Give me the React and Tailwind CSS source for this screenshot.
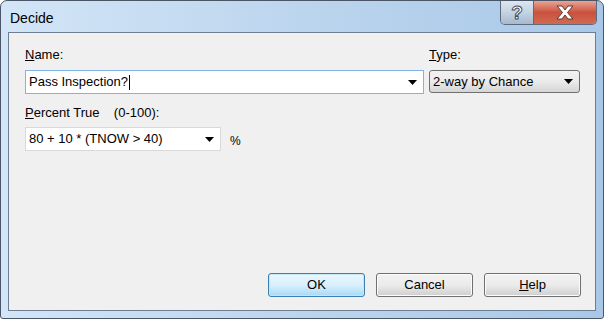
import React from 'react';

const FONT = { fontFamily: '"Liberation Sans", Arial, sans-serif' };

function Arrow() {
  return (
    <svg width="9" height="5" viewBox="0 0 9 5" aria-hidden="true">
      <polygon points="0,0 9,0 4.5,5" fill="#000" />
    </svg>
  );
}

function Button({ children, primary }) {
  return (
    <button
      type="button"
      className={`flex h-[24px] w-[97px] items-center justify-center rounded-[3px] border text-[13px] text-black ${
        primary
          ? 'border-[#3c7fb1] bg-gradient-to-b from-[#eaf6fd] via-[#d9f0fc] to-[#a7d9f5] shadow-[inset_0_0_0_1px_#c4e6f9]'
          : 'border-[#707070] bg-gradient-to-b from-[#f2f2f2] via-[#ebebeb] to-[#cfcfcf] shadow-[inset_0_0_0_1px_#fcfcfc]'
      }`}
    >
      {children}
    </button>
  );
}

export default function App() {
  return (
    <div className="h-[319px] w-[604px] bg-white" style={FONT}>
      <div className="flex h-full w-full flex-col rounded-t-[7px] rounded-b-[3px] border border-[#4a5566] bg-gradient-to-r from-[#d3e5f7] via-[#bcd5ee] to-[#a9c8e8]">
        {/* title bar */}
        <div className="flex h-[31px] items-start">
          <span className="ml-[9px] mt-[9px] text-[14px] leading-[16px] text-black">Decide</span>
          <div className="ml-auto mr-[6px] flex h-[24px] overflow-hidden rounded-b-[5px] border border-t-0 border-[#5d6a7c]">
            <div className="flex w-[33px] items-center justify-center border-r border-[#5d6a7c] bg-gradient-to-b from-[#dde7f1] via-[#c4d3e2] to-[#a7b9cc]">
              <span
                className="text-[19px] font-bold leading-none text-white"
                style={{ WebkitTextStroke: '1px #44505e' }}
              >
                ?
              </span>
            </div>
            <div className="flex w-[62px] items-center justify-center bg-gradient-to-b from-[#e8a495] via-[#c9513d] to-[#d16a52]">
              <svg width="20" height="15" viewBox="0 0 20 15" aria-hidden="true">
                <path
                  d="M2 1 H7 L10 5 L13 1 H18 L12.5 7.5 L18 14 H13 L10 10 L7 14 H2 L7.5 7.5 Z"
                  fill="#fff"
                  stroke="#5a3a36"
                  strokeWidth="1"
                  strokeLinejoin="round"
                />
              </svg>
            </div>
          </div>
        </div>

        {/* client area */}
        <div className="mx-[7px] mb-[7px] flex flex-1 flex-col border border-[#6d7e91] bg-[#f0f0f0] pl-[16px] pr-[14px] pb-[13px] pt-[14px] text-[13px] text-black">
          <div className="flex gap-[5px]">
            <div className="flex w-[399px] flex-col">
              <span className="h-[16px] leading-[16px]">
                <u>N</u>ame:
              </span>
              <div className="mt-[7px] flex h-[24px] items-center border border-[#7eb4ea] bg-white pl-[3px] pr-[6px]">
                <span className="leading-[16px]">Pass Inspection?</span>
                <span className="ml-[1px] h-[15px] w-px bg-black" />
                <span className="ml-auto">
                  <Arrow />
                </span>
              </div>
            </div>
            <div className="flex w-[151px] flex-col">
              <span className="h-[16px] leading-[16px]">
                <u>T</u>ype:
              </span>
              <div className="mt-[7px] flex h-[23px] items-center rounded-[3px] border border-[#707070] bg-gradient-to-b from-[#f2f2f2] via-[#ebebeb] to-[#d5d5d5] pl-[3px] pr-[6px]">
                <span className="leading-[16px]">2-way by Chance</span>
                <span className="ml-auto">
                  <Arrow />
                </span>
              </div>
            </div>
          </div>

          <span className="mt-[11px] h-[16px] leading-[16px]">
            <u>P</u>ercent True&nbsp;&nbsp;&nbsp; (0-100):
          </span>
          <div className="mt-[6px] flex items-center">
            <div className="flex h-[24px] w-[196px] items-center border border-[#d9d9d9] bg-white pl-[3px] pr-[6px]">
              <span className="leading-[16px]">80 + 10 * (TNOW &gt; 40)</span>
              <span className="ml-auto">
                <Arrow />
              </span>
            </div>
            <span className="ml-[9px] mt-[4px] text-[12px]">%</span>
          </div>

          <div className="mt-auto flex justify-end gap-[11px]">
            <Button primary>OK</Button>
            <Button>Cancel</Button>
            <Button>
              <span>
                <u>H</u>elp
              </span>
            </Button>
          </div>
        </div>
      </div>
    </div>
  );
}
